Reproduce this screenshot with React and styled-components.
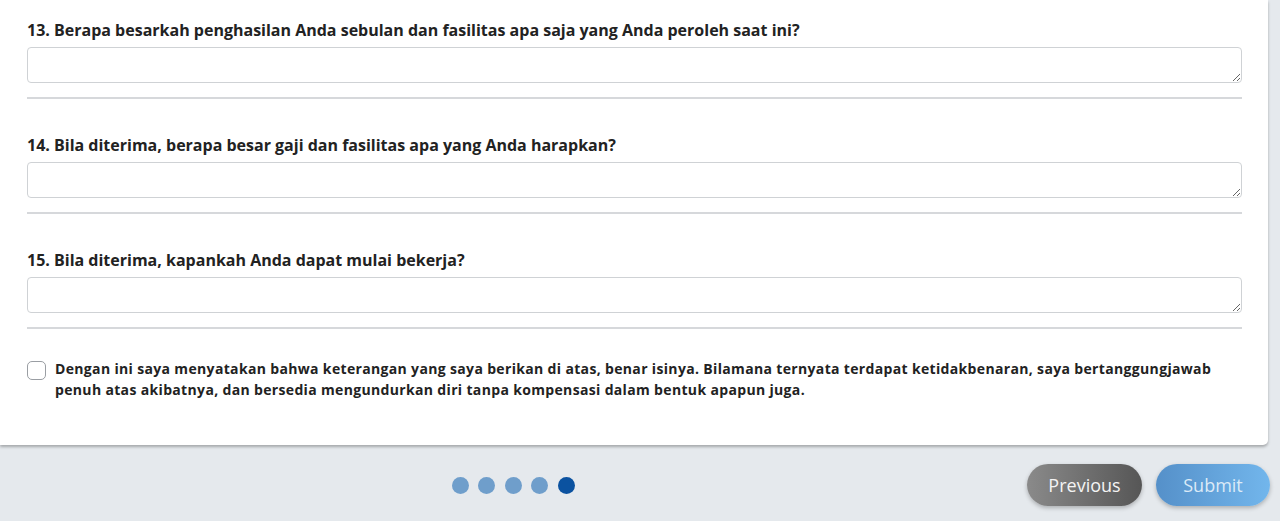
import React, { useState } from 'react';
import styled, { createGlobalStyle } from 'styled-components';

const Global = createGlobalStyle`
html, body {
  margin: 0;
  padding: 0;
  background: #e5e9ed;
  font-family: "Open Sans", "Liberation Sans", sans-serif;
}
`

const Page = styled.div`
width: 1280px;
height: 521px;
overflow: hidden;
display: flex;
flex-direction: column;
`

const Card = styled.div`
width: 1268px;
box-sizing: border-box;
background: #fff;
border-radius: 0 0 5px 0;
box-shadow: 0 2px 3px rgba(0,0,0,0.28);
padding: 19px 26px 0 27px;
height: 445px;
`

const Question = styled.div`
display: flex;
flex-direction: column;
`

const Label = styled.label`
font-size: 16px;
line-height: 22px;
font-weight: 700;
color: #222;
margin-bottom: 6px;
`

const Area = styled.textarea`
height: 36px;
box-sizing: border-box;
border: 1px solid #cfd2d5;
border-radius: 4px;
resize: vertical;
font-family: inherit;
`

const Divider = styled.hr`
border: none;
border-top: 2px solid #d6d8db;
margin: 14px 0 35px;
`

const Agree = styled.label`
display: flex;
align-items: flex-start;
gap: 9px;
margin-top: -6px;
font-size: 14px;
line-height: 21px;
font-weight: 700;
letter-spacing: 0.34px;
color: #222;
`

const Box = styled.span`
flex: none;
width: 17px;
height: 17px;
margin-top: 3px;
border: 1.5px solid ${p => p.checked ? '#0b57a0' : '#9a9ea3'};
background: ${p => p.checked ? '#0b57a0' : '#fff'};
border-radius: 5px;
`

const Footer = styled.div`
flex: 1;
display: flex;
align-items: center;
padding: 0 10px 0 0;
position: relative;
`

const Dots = styled.div`
position: absolute;
left: 451.5px;
top: 31.5px;
display: flex;
gap: 9.5px;
`

const Dot = styled.span`
width: 17px;
height: 17px;
border-radius: 50%;
background: ${p => p.active ? '#0b52a0' : '#6f9ecb'};
`

const Buttons = styled.div`
margin-left: auto;
display: flex;
gap: 14px;
margin-top: 4px;
`

const Button = styled.button`
width: ${p => p.w}px;
height: 42px;
border: none;
border-radius: 21px;
font-family: inherit;
font-size: 18px;
color: ${p => p.primary ? '#dbeaf7' : '#f4f4f4'};
background: ${p => p.primary
  ? 'linear-gradient(90deg, #5590c9, #72b6ec)'
  : 'linear-gradient(90deg, #8a8a8a, #565656)'};
box-shadow: 0 2px 4px rgba(0,0,0,0.25);
cursor: pointer;
`

const questions = [
  '13. Berapa besarkah penghasilan Anda sebulan dan fasilitas apa saja yang Anda peroleh saat ini?',
  '14. Bila diterima, berapa besar gaji dan fasilitas apa yang Anda harapkan?',
  '15. Bila diterima, kapankah Anda dapat mulai bekerja?',
]

export default function App() {
  const [checked, setChecked] = useState(false)
  return (
    <Page>
      <Global />
      <Card>
        {questions.map(q => (
          <React.Fragment key={q}>
            <Question>
              <Label>{q}</Label>
              <Area />
            </Question>
            <Divider />
          </React.Fragment>
        ))}
        <Agree onClick={() => setChecked(!checked)}>
          <Box checked={checked} />
          <span>
            Dengan ini saya menyatakan bahwa keterangan yang saya berikan di atas, benar isinya. Bilamana ternyata terdapat ketidakbenaran, saya bertanggungjawab penuh atas akibatnya, dan bersedia mengundurkan diri tanpa kompensasi dalam bentuk apapun juga.
          </span>
        </Agree>
      </Card>
      <Footer>
        <Dots>
          {[0, 1, 2, 3, 4].map(i => <Dot key={i} active={i === 4} />)}
        </Dots>
        <Buttons>
          <Button w={115}>Previous</Button>
          <Button w={114} primary>Submit</Button>
        </Buttons>
      </Footer>
    </Page>
  );
}
